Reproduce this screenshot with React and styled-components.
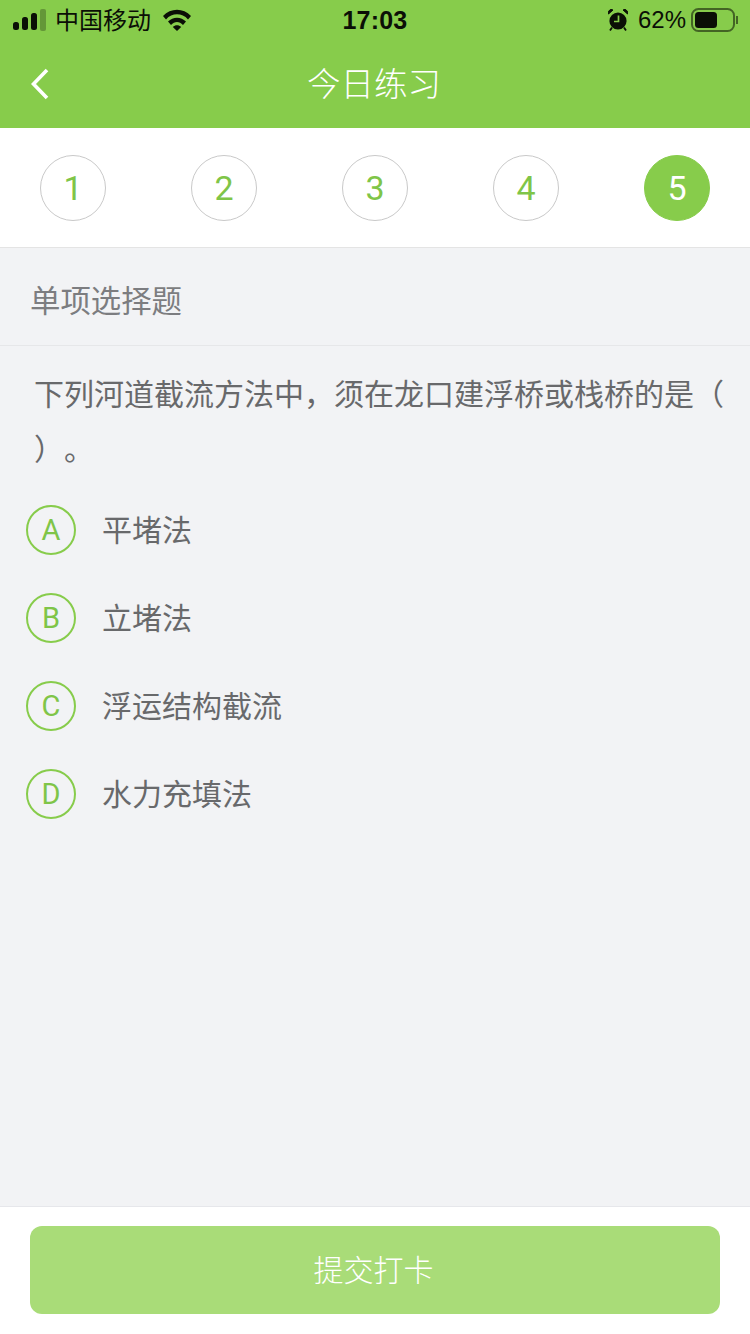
import React from 'react';
import styled, { createGlobalStyle } from 'styled-components';

const GlobalStyle = createGlobalStyle`
  html, body {
    margin: 0;
    padding: 0;
    background: #f2f3f5;
  }
  * {
    box-sizing: border-box;
  }
`;

const latin = `"Liberation Sans", "Noto Sans CJK SC", sans-serif`;
const cjk = `"Noto Sans CJK SC", "Liberation Sans", sans-serif`;
const digits = `Roboto, "Liberation Sans", sans-serif`;
const green = '#87cc4b';

const Page = styled.div`
  width: 750px;
  height: 1334px;
  display: flex;
  flex-direction: column;
  background: #f2f3f5;
  font-family: ${cjk};
  text-spacing-trim: space-all;
  overflow: hidden;
`;

const Header = styled.header`
  background: ${green};
  height: 128px;
`;

const StatusBar = styled.div`
  height: 40px;
  padding: 0 11px;
  display: grid;
  grid-template-columns: 1fr auto 1fr;
  align-items: center;
  color: #0b0f06;
`;

const StatusLeft = styled.div`
  display: flex;
  align-items: center;
  padding-left: 2px;
`;

const Carrier = styled.span`
  font-size: 24px;
  line-height: 38px;
  padding-bottom: 2px;
  margin: 0 11px 0 9px;
`;

const Time = styled.span`
  font-family: ${latin};
  font-size: 25px;
  font-weight: 700;
  letter-spacing: 0.2px;
`;

const StatusRight = styled.div`
  display: flex;
  align-items: center;
  justify-content: flex-end;
`;

const Percent = styled.span`
  font-family: ${latin};
  font-size: 24px;
  margin: 0 5px 0 10px;
`;

const NavBar = styled.div`
  height: 88px;
  padding: 0 33px 0 31px;
  display: grid;
  grid-template-columns: 1fr auto 1fr;
  align-items: center;
`;

const Title = styled.h1`
  margin: 0;
  padding-bottom: 4px;
  font-size: 33.5px;
  font-weight: 300;
  line-height: 84px;
  color: #fff;
`;

const Steps = styled.div`
  height: 120px;
  padding: 0 40px 0;
  display: flex;
  align-items: center;
  justify-content: space-between;
  background: #fff;
  border-bottom: 1px solid #e4e4e4;
`;

const Step = styled.div`
  width: 66px;
  height: 66px;
  border-radius: 50%;
  display: flex;
  align-items: center;
  justify-content: center;
  font-family: ${digits};
  font-size: 34px;
  font-weight: 400;
  color: ${(p) => (p.$active ? '#fff' : '#7fc548')};
  background: ${(p) => (p.$active ? green : '#fff')};
  border: 1px solid ${(p) => (p.$active ? green : '#c9c9c9')};
`;

const SectionTitle = styled.div`
  height: 98px;
  padding: 4px 0 0 30px;
  display: flex;
  align-items: center;
  font-size: 30.4px;
  color: #7c7d80;
  border-bottom: 1px solid #e6e7e9;
`;

const Question = styled.p`
  margin: 0;
  padding: 19px 20px 0 34px;
  font-size: 30px;
  line-height: 55px;
  color: #68696b;
`;

const Options = styled.ul`
  list-style: none;
  margin: 0;
  padding: 30px 0 0 26px;
  display: flex;
  flex-direction: column;
  gap: 38px;
  flex: 1;
`;

const Option = styled.li`
  height: 50px;
  display: flex;
  align-items: center;
  gap: 26px;
  font-size: 30px;
  color: #68696b;
`;

const OptionText = styled.span`
  margin-bottom: 4px;
`;

const Letter = styled.span`
  width: 50px;
  height: 50px;
  border-radius: 50%;
  border: 2px solid ${green};
  display: flex;
  align-items: center;
  justify-content: center;
  font-family: ${digits};
  font-size: 29px;
  font-weight: 400;
  color: #7fc548;
`;

const Footer = styled.footer`
  height: 128px;
  padding: 19px 30px 0;
  background: #fff;
  border-top: 1px solid #e6e7eb;
`;

const Submit = styled.button`
  width: 100%;
  height: 88px;
  padding: 0 3px 4px 0;
  border: 0;
  border-radius: 12px;
  background: #a9dc78;
  color: #fff;
  font-family: ${cjk};
  font-size: 30px;
  font-weight: 300;
`;

const SignalIcon = () => (
  <svg width="33" height="22" viewBox="0 0 33 22">
    <rect x="0" y="13" width="6" height="8" rx="2.5" fill="#0b0f06" />
    <rect x="9" y="8" width="6" height="13" rx="2.5" fill="#0b0f06" />
    <rect x="18" y="4" width="6" height="17" rx="2.5" fill="#0b0f06" />
    <rect x="27" y="0" width="6" height="22" rx="2" fill="#0b0f06" fillOpacity="0.28" />
  </svg>
);

const WifiIcon = () => (
  <svg width="30" height="22" viewBox="0 0 30 22">
    <path d="M1 7C8.6 -1.4 21.4 -1.4 29 7L26 10.4C20 3.6 10 3.6 4 10.4Z" fill="#0b0f06" />
    <path d="M6 12.6C11 7.4 19 7.4 24 12.6L21 16C17.4 12 12.6 12 9 16Z" fill="#0b0f06" />
    <path d="M10.8 18C13.2 15.6 16.8 15.6 19.2 18L15 22Z" fill="#0b0f06" />
  </svg>
);

const AlarmIcon = () => (
  <svg width="20" height="22" viewBox="0 0 20 22">
    <circle cx="10" cy="12" r="8.6" fill="#0b0f06" />
    <path d="M0.5 5L5 1L2.8 0.2L0.2 2.6Z M19.5 5L15 1L17.2 0.2L19.8 2.6Z" fill="#0b0f06" stroke="#0b0f06" />
    <path d="M4 18.5L2 21.5M16 18.5L18 21.5" stroke="#0b0f06" strokeWidth="1.8" />
    <path d="M10.5 6.5V12.5H6" stroke="#87cc4b" strokeWidth="1.7" fill="none" />
  </svg>
);

const BatteryIcon = () => (
  <svg width="48" height="24" viewBox="0 0 48 24">
    <rect x="1" y="1" width="42" height="22" rx="6.5" fill="none" stroke="#0b0f06" strokeOpacity="0.55" strokeWidth="2" />
    <rect x="4" y="4" width="22" height="16" rx="3.5" fill="#0b0f06" />
    <path d="M46 8V16" stroke="#0b0f06" strokeOpacity="0.55" strokeWidth="2" />
  </svg>
);

const BackIcon = () => (
  <svg width="18" height="32" viewBox="0 0 18 32">
    <polyline points="16,2 2.5,16 16,30" fill="none" stroke="#fff" strokeWidth="3.6" />
  </svg>
);

const steps = [1, 2, 3, 4, 5];
const options = [
  ['A', '平堵法'],
  ['B', '立堵法'],
  ['C', '浮运结构截流'],
  ['D', '水力充填法'],
];

export default function App() {
  return (
    <Page>
      <GlobalStyle />
      <Header>
        <StatusBar>
          <StatusLeft>
            <SignalIcon />
            <Carrier>中国移动</Carrier>
            <WifiIcon />
          </StatusLeft>
          <Time>17:03</Time>
          <StatusRight>
            <AlarmIcon />
            <Percent>62%</Percent>
            <BatteryIcon />
          </StatusRight>
        </StatusBar>
        <NavBar>
          <BackIcon />
          <Title>今日练习</Title>
        </NavBar>
      </Header>
      <Steps>
        {steps.map((n) => (
          <Step key={n} $active={n === 5}>
            {n}
          </Step>
        ))}
      </Steps>
      <SectionTitle>单项选择题</SectionTitle>
      <Question>
        下列河道截流方法中，须在龙口建浮桥或栈桥的是（
        <br />
        ）。
      </Question>
      <Options>
        {options.map(([letter, text]) => (
          <Option key={letter}>
            <Letter>{letter}</Letter>
            <OptionText>{text}</OptionText>
          </Option>
        ))}
      </Options>
      <Footer>
        <Submit>提交打卡</Submit>
      </Footer>
    </Page>
  );
}
